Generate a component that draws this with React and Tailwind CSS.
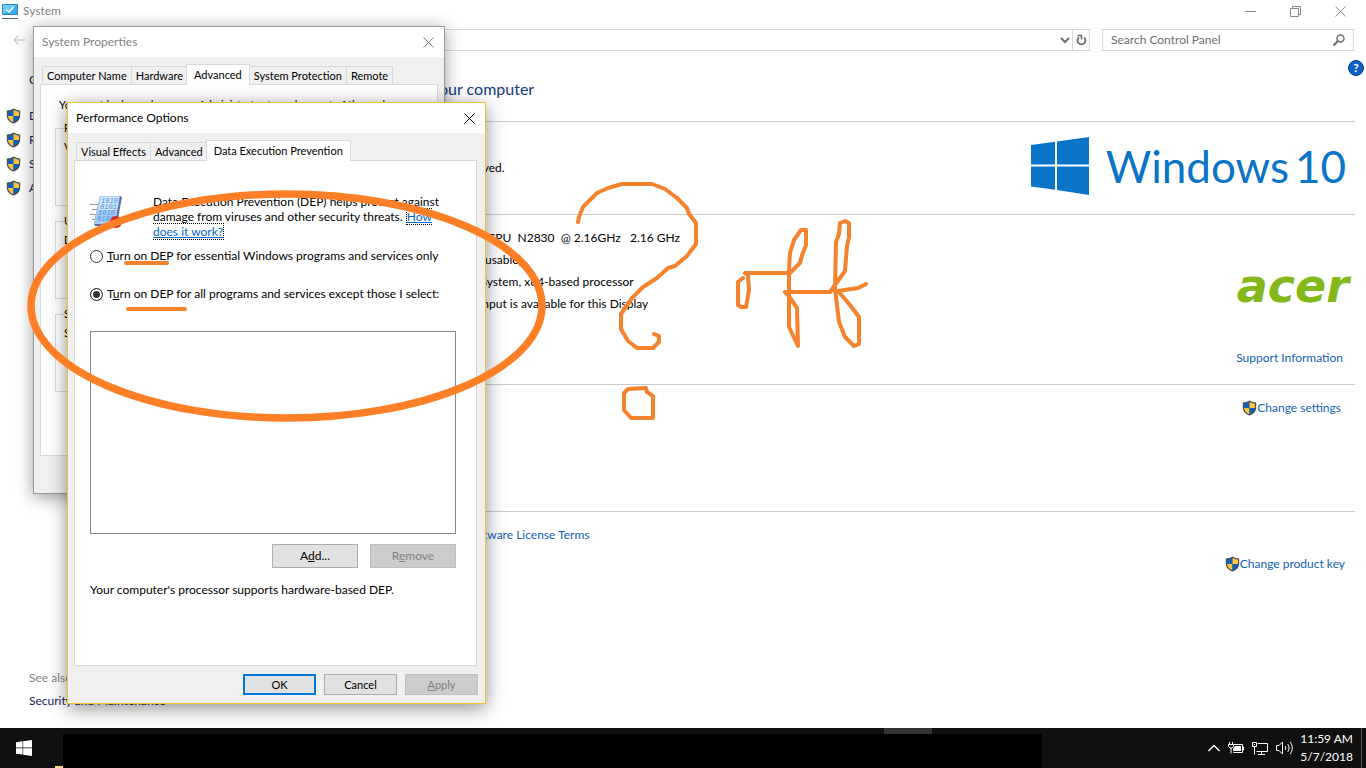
import React, { useState } from "react";
import { clsx } from "clsx";

const SYSTEM_ROWS = [
  ["Manufacturer:", "Acer"],
  ["Processor:", "Intel(R) Celeron(R) CPU  N2830  @ 2.16GHz   2.16 GHz"],
  ["Installed memory (RAM):", "4.00 GB (3.89 GB usable)"],
  ["System type:", "64-bit Operating System, x64-based processor"],
  ["Pen and Touch:", "No Pen or Touch Input is available for this Display"],
];

const SIDE_LINKS = [
  "Device Manager",
  "Remote settings",
  "System protection",
  "Advanced system settings",
];

const GROUPS = [
  ["Performance", "Visual effects, processor scheduling"],
  ["User Profiles", "Desktop settings related to your sign-in"],
  ["Startup and Recovery", "System startup and system failure"],
];

function Shield() {
  return (
    <svg width="15" height="16" viewBox="0 0 15 16" className="shrink-0">
      <path d="M7.5 .6C5.6 1.9 3.2 2.4.8 2.4v5c0 4 2.8 6.700 6.700 8 3.900-1.300 6.700-4 6.700-8v-5C11.800 2.400 9.400 1.900 7.500.6z" fill="#4a4f57" />
      <path d="M7.500 1.900C6 2.800 4 3.400 2 3.500V8h5.500z" fill="#0f62b5" />
      <path d="M7.500 1.900C9 2.800 11 3.400 13 3.500V8H7.500z" fill="#f9c440" />
      <path d="M2 8c.2 3 2.300 5 5.500 6.200V8z" fill="#f9c440" />
      <path d="M13 8c-.2 3-2.300 5-5.500 6.200V8z" fill="#0f62b5" />
    </svg>
  );
}

function CloseIcon() {
  return (
    <svg width="11" height="11" viewBox="0 0 11 11" fill="none" stroke="currentColor">
      <path d="M.5.5l10 10M10.500.5l-10 10" />
    </svg>
  );
}

function WindowsFlag({ size }) {
  return (
    <svg width={size} height={size} viewBox="0 0 58 58" fill="currentColor" className="shrink-0">
      <path d="M0 8l24-3.300V27.500H0zM26 4.400L58 0v27.500H26zM0 29.500h24v23.300L0 49.500zM26 29.500h32V58l-32-4.900z" />
    </svg>
  );
}

function DepIcon() {
  return (
    <svg width="32" height="34" viewBox="0 0 32 34" className="shrink-0">
      <g stroke="#8c96a8" strokeWidth="1">
        <path d="M0 10.500h8M2 15.500h6M0 20.500h6M2 25.500h4" />
      </g>
      <path d="M10 2h20l2 1-5 27-2 2H5l-1-2z" fill="#5d6fae" />
      <path d="M10 2h20l-5 28H4z" fill="#a9cdf5" />
      <path d="M11 3h18l-2.500 13H8.500z" fill="#d3e7fc" />
      <g fill="#3f8de0" fontSize="7" fontFamily="Liberation Mono, monospace" fontStyle="italic">
        <text x="11" y="9">1010</text>
        <text x="10" y="15">0101</text>
        <text x="8" y="21">1010</text>
        <text x="7" y="27">0101</text>
      </g>
      <circle cx="26" cy="28" r="6" fill="#d8241c" />
    </svg>
  );
}

function Tab({ children, selected, onClick }) {
  return (
    <button
      role="tab"
      aria-selected={selected}
      onClick={onClick}
      className={clsx(
        "border border-b-0 border-[#d9d9d9] whitespace-nowrap text-[11px] leading-4",
        selected ? "relative z-10 -mx-px -mb-px h-[21px] bg-white px-[7px]" : "-mr-px h-[18px] bg-[#f0f0f0] px-1"
      )}
    >
      {children}
    </button>
  );
}

function DialogButton({ children, className, ...rest }) {
  return (
    <button
      className={clsx(
        "border leading-4 disabled:border-[#bfbfbf] disabled:bg-[#cccccc] disabled:text-[#838383]",
        className
      )}
      {...rest}
    >
      {children}
    </button>
  );
}

function Section({ title, className, children }) {
  return (
    <section className={className}>
      <div className="flex h-5 items-center gap-[2px]">
        <h2 className="whitespace-nowrap">{title}</h2>
        <div className="h-px flex-1 bg-[#cccccc]" />
      </div>
      <div className="flex items-start justify-between pl-[18px]">{children}</div>
    </section>
  );
}

function SystemWindow() {
  return (
    <div className="flex flex-1 flex-col">
      <header className="flex h-[22px] items-center pl-[2px] text-[#838383]">
        <svg width="16" height="16" viewBox="0 0 16 16">
          <path d="M.5 1.500h15v10H.5z" fill="#3db1f0" stroke="#2b84b8" />
          <path d="M1 2h14L1 11z" fill="#6fcaf7" />
          <path d="M4.500 6.500l2.500 2.500 4.500-5" fill="none" stroke="#fff" strokeWidth="1.500" />
          <path d="M0 15.500h16" stroke="#5c6f7c" />
        </svg>
        <h1 className="ml-[5px] flex-1">System</h1>
        <div className="flex gap-[34px] pr-5 text-[#8a8a8a]">
          <button aria-label="Minimize">
            <svg width="11" height="11" viewBox="0 0 11 11" stroke="currentColor">
              <path d="M0 5.500h11" />
            </svg>
          </button>
          <button aria-label="Restore">
            <svg width="11" height="11" viewBox="0 0 11 11" fill="none" stroke="currentColor">
              <path d="M.5 2.500h8v8h-8zM2.500 2.500v-2h8v8h-2" />
            </svg>
          </button>
          <button aria-label="Close">
            <CloseIcon />
          </button>
        </div>
      </header>

      <div className="mt-[7px] flex h-[22px] items-center pr-3 pl-3 text-[#6d6d6d]">
        <button aria-label="Back" className="w-[60px] text-[#d0d0d0]">
          <svg width="14" height="12" viewBox="0 0 14 12" fill="none" stroke="currentColor" strokeWidth="1.500">
            <path d="M13 6H2M6.500 1.500L2 6l4.500 4.500" />
          </svg>
        </button>
        <div className="flex h-full flex-1 items-center justify-end border border-[#d9d9d9]">
          <button aria-label="Previous locations" className="px-[2px]">
            <svg width="10" height="8" viewBox="0 0 10 8" fill="none" stroke="currentColor" strokeWidth="2">
              <path d="M1 2l4 4 4-4" />
            </svg>
          </button>
          <button aria-label="Refresh" className="flex h-full w-[17px] items-center justify-center border-l border-[#d9d9d9]">
            <svg width="11" height="12" viewBox="0 0 11 12" fill="none" stroke="currentColor" strokeWidth="1.800">
              <path d="M3 3.200A4 4 0 1 0 8.200 3.400" />
              <path d="M1.500 1.500h4v4" strokeWidth="1.500" />
            </svg>
          </button>
        </div>
        <label className="ml-3 flex h-full w-[252px] items-center border border-[#d9d9d9] pr-2 pl-2">
          <input
            type="text"
            aria-label="Search Control Panel"
            placeholder="Search Control Panel"
            className="min-w-0 flex-1 outline-none placeholder:text-[#6d6d6d]"
          />
          <svg width="12" height="12" viewBox="0 0 12 12" fill="none" stroke="currentColor" strokeWidth="1.500">
            <circle cx="7.500" cy="4.500" r="3.500" />
            <path d="M5 7l-4.500 4.500" strokeWidth="2" />
          </svg>
        </label>
      </div>

      <div className="relative flex flex-1">
        <nav className="flex w-[222px] flex-col pl-[6px] text-[#1a1a5e]">
          <a href="#home" className="mt-[17px] pl-[23px] leading-6">Control Panel Home</a>
          <ul className="mt-3">
            {SIDE_LINKS.map((label) => (
              <li key={label}>
                <a href="#task" className="flex h-6 items-center gap-2 whitespace-nowrap">
                  <Shield />
                  {label}
                </a>
              </li>
            ))}
          </ul>
          <div className="mt-auto pb-4 pl-[23px] leading-[23px]">
            <p className="text-[#838383]">See also</p>
            <a href="#security" className="whitespace-nowrap">Security and Maintenance</a>
          </div>
        </nav>

        <main className="flex-1 pt-[26px] pr-[11px]">
          <h1 className="mb-[10px] text-base text-[#103a80]">View basic information about your computer</h1>
          <Section title="Windows edition" className="h-[93px]">
            <div className="pt-[4px] leading-[22px]">
              <p>Windows 10 Home</p>
              <p>© 2017 Microsoft Corporation. All rights reserved.</p>
            </div>
            <div className="flex items-center pt-[6px] pr-[9px] text-[44px] leading-[58px] text-[#0a74c8]">
              <WindowsFlag size={58} />
              <span className="ml-[17px]">Windows</span>
              <span className="ml-[6px]">10</span>
            </div>
          </Section>
          <Section title="System" className="h-[170px]">
            <table className="-mt-[19px]">
              <tbody>
                {SYSTEM_ROWS.map(([label, value]) => (
                  <tr key={label} className="h-[22px]">
                    <td className="w-[149px] p-0">{label}</td>
                    <td className="p-0 whitespace-pre">{value}</td>
                  </tr>
                ))}
              </tbody>
            </table>
            <div className="flex flex-col items-end pt-[32px] pr-[6px]">
              <span className="font-['DejaVu_Sans',sans-serif] text-[46px] leading-[60px] font-bold text-[#83b81a] italic">acer</span>
              <a href="#support" className="mt-[32px] pr-[6px] leading-5 text-[#0f62b5]">Support Information</a>
            </div>
          </Section>
          <Section title="Computer name, domain, and workgroup settings" className="h-[127px]">
            <p className="pt-1 leading-5">Computer name:</p>
            <a href="#change" className="mt-1 flex items-center pr-[14px] leading-5 text-[#0f62b5]">
              <Shield />
              Change settings
            </a>
          </Section>
          <Section title="Windows activation">
            <div className="pt-1 leading-5">
              <span className="pr-[10px]">Windows is activated</span>
              <a href="#license" className="text-[#0f62b5]">Read the Microsoft Software License Terms</a>
            </div>
            <a href="#key" className="mt-[33px] flex items-center pr-[10px] leading-5 text-[#0f62b5]">
              <Shield />
              Change product key
            </a>
          </Section>
        </main>

        <button aria-label="Help" className="absolute top-[9px] right-[2px] size-4 rounded-full border border-[#0a3f86] bg-[#0f62c5] text-[12px] leading-[14px] font-bold text-white">
          ?
        </button>
      </div>
    </div>
  );
}

function SystemProperties() {
  return (
    <div role="dialog" aria-label="System Properties" className="absolute top-[26px] left-[33px] flex h-[468px] w-[412px] flex-col border border-[#9a9a9a] bg-[#f0f0f0] shadow-[0_3px_16px_rgba(0,0,0,0.4)]">
      <div className="flex h-[30px] items-center justify-between bg-white pr-[10px] pl-2 text-[#838383]">
        <h2>System Properties</h2>
        <button aria-label="Close"><CloseIcon /></button>
      </div>
      <div role="tablist" className="mt-[7px] flex h-[20px] items-end pl-2">
        <Tab>Computer Name</Tab>
        <Tab>Hardware</Tab>
        <Tab selected>Advanced</Tab>
        <Tab>System Protection</Tab>
        <Tab>Remote</Tab>
      </div>
      <div className="mx-[6px] h-[372px] border border-[#d9d9d9] bg-white px-[14px] pt-3">
        <p className="pl-1 text-[11px] leading-4 whitespace-nowrap">
          You must be logged on as an Administrator to make most of these changes.
        </p>
        {GROUPS.map(([title, text]) => (
          <fieldset key={title} className="mt-[7px] h-[86px] border border-[#dcdcdc] px-2">
            <legend className="text-[11px] leading-4">{title}</legend>
            <p className="pt-[3px] text-[11px] leading-4">{text}</p>
          </fieldset>
        ))}
      </div>
    </div>
  );
}

function PerformanceOptions() {
  const [mode, setMode] = useState("all");
  const radio = "size-[13px] shrink-0 appearance-none rounded-full border border-[#333333] bg-white checked:bg-[#333333] checked:shadow-[inset_0_0_0_2px_white]";

  return (
    <div role="dialog" aria-label="Performance Options" className="absolute top-[102px] left-[67px] flex h-[602px] w-[419px] flex-col border border-[#f2c12e] bg-[#f0f0f0] shadow-[0_4px_18px_rgba(0,0,0,0.45)]">
      <div className="flex h-[30px] items-center justify-between bg-white pr-[10px] pl-2">
        <h2>Performance Options</h2>
        <button aria-label="Close"><CloseIcon /></button>
      </div>
      <div role="tablist" className="mt-[7px] flex h-[20px] items-end pl-2">
        <Tab>Visual Effects</Tab>
        <Tab>Advanced</Tab>
        <Tab selected>Data Execution Prevention</Tab>
      </div>
      <div role="tabpanel" className="mr-2 ml-[6px] flex h-[506px] flex-col border border-[#d9d9d9] bg-white pr-5 pl-[15px]">
        <div className="mt-[33px] flex gap-[31px]">
          <DepIcon />
          <p className="leading-[15px] whitespace-nowrap">
            Data Execution Prevention (DEP) helps protect against
            <br />
            damage from viruses and other security threats.{" "}
            <a href="#dep" className="border border-dotted border-black text-[#0066cc] underline">
              How
              <br />
              does it work?
            </a>
          </p>
        </div>
        <label className="mt-[7px] flex h-5 items-center gap-1 whitespace-nowrap">
          <input type="radio" name="dep" className={radio} checked={mode === "essential"} onChange={() => setMode("essential")} />
          <span><u>T</u>urn on DEP for essential Windows programs and services only</span>
        </label>
        <label className="mt-[18px] flex h-5 items-center gap-1 whitespace-nowrap">
          <input type="radio" name="dep" className={radio} checked={mode === "all"} onChange={() => setMode("all")} />
          <span>T<u>u</u>rn on DEP for all programs and services except those I select:</span>
        </label>
        <select multiple aria-label="Programs excluded from DEP" className="mt-[27px] h-[203px] appearance-none border border-[#828790] bg-white" />
        <div className="mt-[10px] flex justify-end gap-3">
          <DialogButton className="h-6 w-[86px] border-[#adadad] bg-[#e1e1e1]">A<u>d</u>d...</DialogButton>
          <DialogButton className="h-6 w-[86px]" disabled>R<u>e</u>move</DialogButton>
        </div>
        <p className="mt-3 leading-5">Your computer's processor supports hardware-based DEP.</p>
      </div>
      <div className="mt-2 flex justify-end gap-2 pr-[7px] text-[11px]">
        <DialogButton className="h-[21px] w-[73px] border-2 border-[#0078d7] bg-[#e1e1e1]">OK</DialogButton>
        <DialogButton className="h-[21px] w-[73px] border-[#adadad] bg-[#e1e1e1]">Cancel</DialogButton>
        <DialogButton className="h-[21px] w-[73px]" disabled><u>A</u>pply</DialogButton>
      </div>
    </div>
  );
}

function Taskbar() {
  return (
    <footer className="flex h-10 bg-[#101010] text-white">
      <button aria-label="Start" className="flex w-12 items-center justify-center">
        <WindowsFlag size={16} />
      </button>
      <div className="mt-auto ml-[7px] h-[2px] w-2 bg-[#f7d488]" />
      <div className="flex flex-1 flex-col">
        <div className="ml-auto mr-[110px] h-[6px] w-12 bg-[#333333]" />
        <div className="flex-1 bg-black" />
      </div>
      <div className="flex w-[324px] items-center justify-end">
        <div className="flex items-center gap-[7px] pr-[7px]">
          <svg width="14" height="16" viewBox="0 0 14 16" fill="none" stroke="currentColor" strokeWidth="1.400">
            <path d="M1.500 11L7 5.500l5.500 5.500" />
          </svg>
          <svg width="17" height="16" viewBox="0 0 17 16" fill="none" stroke="currentColor">
            <path d="M6 4.500h8.500v8h-9M15.500 6.500v4M1.500 2v2.500M4.500 2v2.500M.5 4.500h5v2l-1.500 1.500h-2l-1.500-1.500zM3 8v5.500" />
            <path d="M7 6h6v5H5v-2z" fill="currentColor" stroke="none" />
          </svg>
          <svg width="17" height="16" viewBox="0 0 17 16" fill="none" stroke="currentColor">
            <path d="M5.500 3.500h10v8h-11M.5 2.500h4v4h-4zM2.500 6.500v8M9.500 11.500v3M6 14.500h7" />
            <path d="M2 4.500h1" />
          </svg>
          <svg width="17" height="16" viewBox="0 0 17 16" fill="none" stroke="currentColor">
            <path d="M.5 5.500h2.500l3.500-3.500v12l-3.500-3.500H.5zM9 6c1 1 1 3 0 4M11.500 4c2 2 2 6 0 8M14 2c3 3 3 9 0 12" />
          </svg>
        </div>
        <div className="text-center leading-[18px]">
          <p>11:59 AM</p>
          <p>5/7/2018</p>
        </div>
        <div className="mr-1 ml-2 h-10 w-px bg-[#5a5a5a]" />
      </div>
    </footer>
  );
}

// Pen marks drawn over the desktop
function PenMarks() {
  return (
    <svg width="900" height="450" viewBox="0 0 900 450" fill="none" stroke="#f5822d" strokeWidth="4" strokeLinecap="round" strokeLinejoin="round" className="pointer-events-none absolute top-0 left-0">
      <ellipse cx="286.500" cy="306" rx="255.500" ry="112" stroke="#ff7f27" strokeWidth="7.500" />
      <path d="M126 263h41M128 309h57" />
      <path d="M578 222l1-5 4-10 14-14 11-5 14-4h30l13 5 12 9 10 10 2 6 7 9v21l-9 12-12 10-7 2-11 10-14 9-11 11-11 16v15l7 12 9 7h16l6-6v-6l-5-2" />
      <path d="M646 388l-18 1-4 4v17l7 8h22v-22l-6-4z" />
      <path d="M743 278l-5 4v23l3 2h5l3-17-1-15-3-2h45l10-10 2-8 4-10v-15h-5l-7 10-4 13-1 17v57l9 19-1-38-9-13-3-3h45l15-21 2-25 2-9v-14l-4-2-5 2-1 11-3 8-1 47 4 33 6 15 9 9 5-2v-27l-9-12-12-14 20-3 8-4" />
    </svg>
  );
}

export default function App() {
  return (
    <div className="relative flex min-h-screen flex-col overflow-hidden bg-white font-['Lato','Noto_Sans',sans-serif] text-[12px] leading-4 text-black">
      <SystemWindow />
      <Taskbar />
      <SystemProperties />
      <PerformanceOptions />
      <PenMarks />
    </div>
  );
}
